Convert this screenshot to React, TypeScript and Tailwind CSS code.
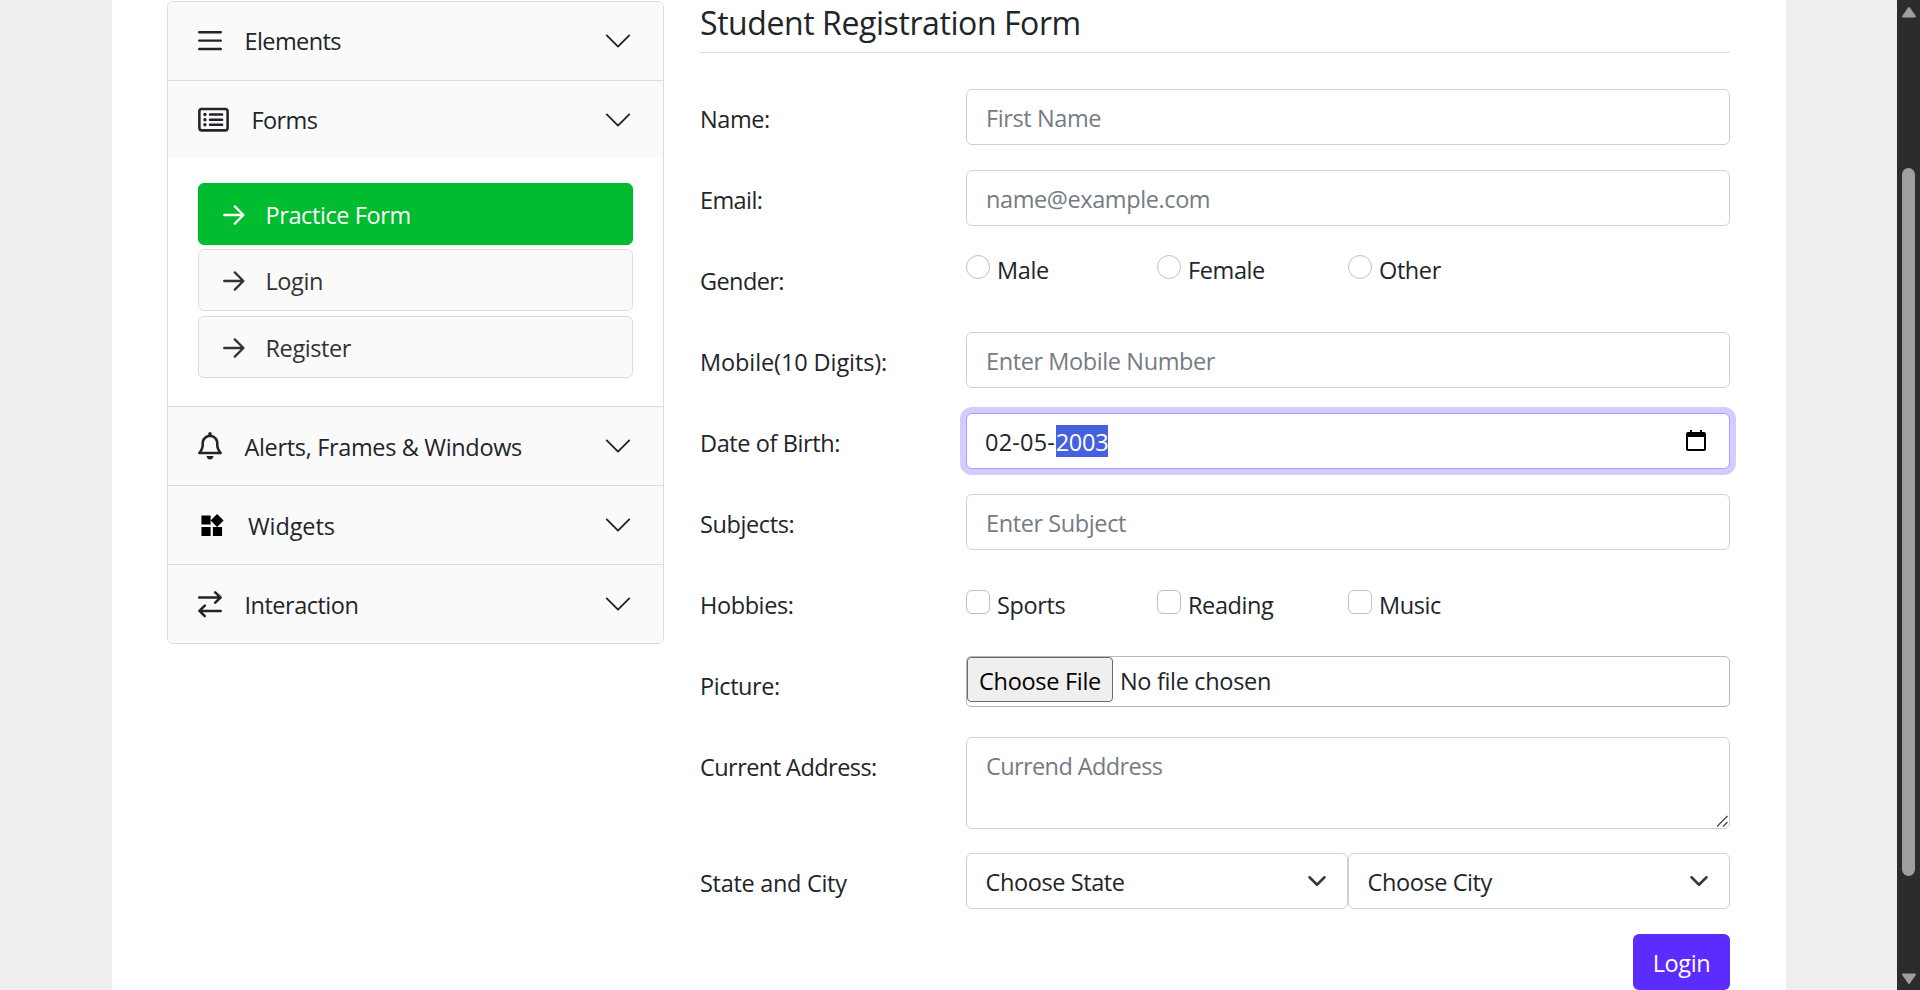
import React from "react";
import { FaRegBell, FaRegRectangleList } from "react-icons/fa6";

const inputClass =
  "block h-[56px] w-full rounded-[6px] border border-[#ced0d9] bg-white pr-[18px] pl-[19px] pt-[2px] placeholder:text-[#757b84] placeholder:opacity-100 outline-none";

function ListIcon() {
  return (
    <svg width="24" height="28" viewBox="0 0 24 28" fill="none" stroke="#212529" strokeWidth="2.4" strokeLinecap="round">
      <path d="M1.2 5.2h21.6M1.2 13.6h21.6M1.2 22h21.6" />
    </svg>
  );
}

function WidgetsIcon() {
  return (
    <svg className="mt-px" width="27.5" height="27.5" viewBox="0 0 24 24" fill="#000">
      <path d="M13 13v8h8v-8h-8zM3 21h8v-8H3v8zM3 3v8h8V3H3zm13.66-1.31L11 7.34 16.66 13l5.66-5.66-5.66-5.65z" />
    </svg>
  );
}

function ExchangeIcon() {
  return (
    <svg width="24" height="28" viewBox="0 0 24 28" fill="none" stroke="#212529" strokeWidth="2.5" strokeLinecap="round" strokeLinejoin="round">
      <path d="M1.2 7.5h21.2M17.2 2.3l5.4 5.2-5.4 5.2M22.8 20.9H1.6M6.8 15.7l-5.4 5.2 5.4 5.2" />
    </svg>
  );
}

function ArrowIcon() {
  return (
    <svg width="22" height="22" viewBox="0 0 22 22" fill="none" stroke="currentColor" strokeWidth="2.3" strokeLinecap="round" strokeLinejoin="round">
      <path d="M1.2 11h19M11.8 2.4l8.6 8.6-8.6 8.6" />
    </svg>
  );
}

function Chevron() {
  return (
    <svg width="30" height="30" viewBox="0 0 16 16" fill="none" stroke="#212529" strokeLinecap="round" strokeLinejoin="round">
      <path d="m2 5 6 6 6-6" />
    </svg>
  );
}

function SectionHeader({ icon, title, textClass = "pt-px" }: { icon: React.ReactNode; title: string; textClass?: string }) {
  return (
    <button type="button" className="flex h-[78px] w-full items-center bg-[#fafafa] pr-[30px] pl-[30px] text-left">
      {icon}
      <span className={"ml-[22.5px] flex-1 " + textClass}>{title}</span>
      <Chevron />
    </button>
  );
}

function SubItem({ label, active = false }: { label: string; active?: boolean }) {
  return (
    <a
      className={
        active
          ? "flex h-[62px] items-center rounded-[6px] border border-[#00b52e] bg-[#00bc2f] pl-[24px] text-white"
          : "flex h-[62px] items-center rounded-[6px] border border-[#dcdcdd] bg-[#fafafa] pl-[24px] text-[#333]"
      }
    >
      <span className="pt-px">
        <ArrowIcon />
      </span>
      <span className="ml-[20.5px] pt-px">{label}</span>
    </a>
  );
}

function Sidebar() {
  return (
    <aside className="mt-px w-[497px] shrink-0 self-start overflow-hidden rounded-[6px] border border-[#dcdcdd] bg-white">
      <SectionHeader icon={<ListIcon />} title="Elements" textClass="tracking-[-0.6px]" />
      <div className="border-t border-[#dcdcdd]">
        <SectionHeader icon={<FaRegRectangleList className="h-[27.4px] w-[31px]" />} title="Forms" textClass="tracking-[-0.6px]" />
        <div className="flex flex-col px-[30px] pt-[24px] pb-[28px]">
          <SubItem label="Practice Form" active />
          <div className="h-[4px]" />
          <SubItem label="Login" />
          <div className="h-[5px]" />
          <SubItem label="Register" />
        </div>
      </div>
      <div className="border-t border-[#dcdcdd]">
        <SectionHeader icon={<FaRegBell className="h-[27.4px] w-[24px]" />} title="Alerts, Frames & Windows" textClass="pt-px tracking-[-0.34px]" />
      </div>
      <div className="border-t border-[#dcdcdd]">
        <SectionHeader icon={<WidgetsIcon />} title="Widgets" textClass="pt-px tracking-[-0.1px]" />
      </div>
      <div className="border-t border-[#dcdcdd]">
        <SectionHeader icon={<ExchangeIcon />} title="Interaction" textClass="pt-px tracking-[-0.5px]" />
      </div>
    </aside>
  );
}

function Row({ label, tall = false, labelClass = "", children }: { label: string; tall?: boolean; labelClass?: string; children: React.ReactNode }) {
  return (
    <div className={tall ? "flex h-[116px]" : "flex h-[81px]"}>
      <label className={"w-[266px] shrink-0 pt-[12px] " + labelClass}>{label}</label>
      <div className="w-[764px]">{children}</div>
    </div>
  );
}

function Choices({ type, options }: { type: "radio" | "checkbox"; options: string[] }) {
  return (
    <div className={type === "radio" ? "flex pt-[4px]" : "flex pt-[15px]"}>
      {options.map((o) => (
        <label key={o} className="flex w-[191px] items-start">
          <input
            type={type}
            name={type}
            className={
              type === "radio"
                ? "size-[24px] appearance-none rounded-full border border-[#bfbfbf] bg-white"
                : "size-[24px] appearance-none rounded-[6px] border border-[#bfbfbf] bg-white"
            }
          />
          <span className="-mt-[3px] ml-[7px]">{o}</span>
        </label>
      ))}
    </div>
  );
}

function Select({ value }: { value: string }) {
  return (
    <div className="flex h-[56px] flex-1 items-center justify-between rounded-[6px] border border-[#ced0d9] bg-white pr-[20px] pl-[18.5px]">
      <span className="pt-[2px]">{value}</span>
      <svg width="20" height="20" viewBox="0 0 16 16" fill="none" stroke="#343a40" strokeWidth="2" strokeLinecap="round" strokeLinejoin="round">
        <path d="m2 5 6 6 6-6" />
      </svg>
    </div>
  );
}

function RegistrationForm() {
  return (
    <form className="ml-[36px] w-[1030px]">
      <h1 className="h-[53px] border-b border-[#dcdee5] text-[32px] leading-[45px] tracking-[-0.42px]">Student Registration Form</h1>
      <div className="mt-[36px]">
        <Row label="Name:">
          <input className={inputClass} placeholder="First Name" />
        </Row>
        <Row label="Email:" labelClass="tracking-[-0.6px]">
          <input className={inputClass} placeholder="name@example.com" />
        </Row>
        <Row label="Gender:" labelClass="tracking-[-0.6px]">
          <Choices type="radio" options={["Male", "Female", "Other"]} />
        </Row>
        <Row label="Mobile(10 Digits):" labelClass="tracking-[-0.1px]">
          <input className={inputClass} placeholder="Enter Mobile Number" />
        </Row>
        <Row label="Date of Birth:">
          <div className="flex h-[56px] items-center rounded-[6px] border border-[#95a5fb] bg-white pr-[23px] pl-[18px] shadow-[0_0_0_6px_#d6caff]">
            <span className="flex flex-1 items-center">
              <span className="w-[71px] pt-[2px] tracking-[0.2px]">02-05-</span>
              <span className="flex h-[32px] w-[52px] items-center justify-center bg-[#4561dd] pt-[2px] tracking-[-0.3px] text-white">2003</span>
            </span>
            <svg width="20" height="22" viewBox="0 0 20 22">
              <path fillRule="evenodd" d="M4 0h2v2h8V0h2v2h2a2 2 0 0 1 2 2v15a2 2 0 0 1-2 2H2a2 2 0 0 1-2-2V4a2 2 0 0 1 2-2h2zM2 7v12h16V7z" />
            </svg>
          </div>
        </Row>
        <Row label="Subjects:">
          <input className={inputClass} placeholder="Enter Subject" />
        </Row>
        <Row label="Hobbies:">
          <Choices type="checkbox" options={["Sports", "Reading", "Music"]} />
        </Row>
        <Row label="Picture:">
          <div className="flex h-[51px] items-start rounded-[5px] border border-[#b9b9b9]">
            <button type="button" className="flex h-[45px] w-[146px] items-center justify-center rounded-[4px] border border-[#6b6b6b] bg-[#efefef] pt-[2px] tracking-[-0.3px] text-black">
              Choose File
            </button>
            <span className="ml-[7px] flex h-[45px] items-center pt-[2px] tracking-[-0.33px]">No file chosen</span>
          </div>
        </Row>
        <Row label="Current Address:" tall labelClass="tracking-[-0.55px]">
          <div className="relative">
            <textarea
              className="block h-[92px] w-full resize-none rounded-[6px] border border-[#ced0d9] bg-white pr-[18px] pl-[19px] py-[10px] tracking-[-0.6px] outline-none placeholder:text-[#757b84] placeholder:opacity-100"
              placeholder="Currend Address"
            />
            <svg className="absolute right-[2px] bottom-[2px]" width="12" height="12" viewBox="0 0 12 12" stroke="#4a4a4a" strokeWidth="1.4">
              <path d="M1 11.5 11.5 1M7 11.5 11.5 7" />
            </svg>
          </div>
        </Row>
        <Row label="State and City" labelClass="tracking-[-0.3px]">
          <div className="flex">
            <Select value="Choose State" />
            <Select value="Choose City" />
          </div>
        </Row>
        <div className="flex justify-end">
          <button type="button" className="h-[56px] w-[97px] rounded-[6px] bg-[#5c2cff] pt-[2px] text-white">
            Login
          </button>
        </div>
      </div>
    </form>
  );
}

function Scrollbar() {
  return (
    <div className="flex h-full w-[23px] shrink-0 flex-col items-center bg-[#2c2c2c] pt-[6px] pb-[5px]">
      <svg width="16" height="12" viewBox="0 0 16 12" fill="#9f9f9f" stroke="#9f9f9f" strokeWidth="2" strokeLinejoin="round">
        <path d="M8 2 14 10.5H2z" />
      </svg>
      <div className="mt-[150px] h-[708px] w-[13px] rounded-full bg-[#9f9f9f]" />
      <svg className="mt-auto" width="16" height="12" viewBox="0 0 16 12" fill="#9f9f9f" stroke="#9f9f9f" strokeWidth="2" strokeLinejoin="round">
        <path d="M8 10 14 1.5H2z" />
      </svg>
    </div>
  );
}

export default function App() {
  return (
    <div className="flex h-[990px] w-[1920px] overflow-hidden bg-[#eee] font-['Open_Sans','Noto_Sans',sans-serif] text-[23.5px] leading-[36px] tracking-[-0.4px] text-[#212529]">
      <div className="flex flex-1 pl-[112px]">
        <main className="flex w-[1674px] bg-white pl-[55px]">
          <Sidebar />
          <RegistrationForm />
        </main>
      </div>
      <Scrollbar />
    </div>
  );
}
